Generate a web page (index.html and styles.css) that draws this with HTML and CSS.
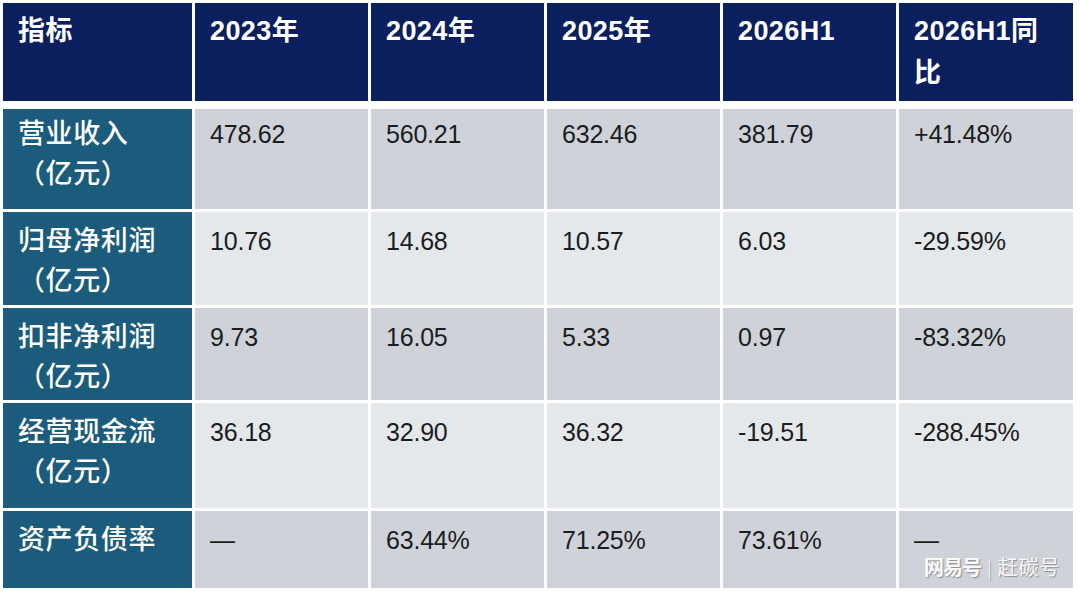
FILE: index.html
```html
<!DOCTYPE html>
<html lang="zh-CN">
<head>
<meta charset="utf-8">
<title>财务指标</title>
<link rel="stylesheet" href="styles.css">
</head>
<body>
<div class="page">
  <div class="table">
    <div class="row head">
      <div class="cell">指标</div>
      <div class="cell">2023年</div>
      <div class="cell">2024年</div>
      <div class="cell">2025年</div>
      <div class="cell">2026H1</div>
      <div class="cell">2026H1同比</div>
    </div>
    <div class="row r1 grey">
      <div class="cell label">营业收入<br>（亿元）</div>
      <div class="cell">478.62</div>
      <div class="cell">560.21</div>
      <div class="cell">632.46</div>
      <div class="cell">381.79</div>
      <div class="cell">+41.48%</div>
    </div>
    <div class="row r2 light">
      <div class="cell label">归母净利润<br>（亿元）</div>
      <div class="cell">10.76</div>
      <div class="cell">14.68</div>
      <div class="cell">10.57</div>
      <div class="cell">6.03</div>
      <div class="cell">-29.59%</div>
    </div>
    <div class="row r3 grey">
      <div class="cell label">扣非净利润<br>（亿元）</div>
      <div class="cell">9.73</div>
      <div class="cell">16.05</div>
      <div class="cell">5.33</div>
      <div class="cell">0.97</div>
      <div class="cell">-83.32%</div>
    </div>
    <div class="row r4 light">
      <div class="cell label">经营现金流<br>（亿元）</div>
      <div class="cell">36.18</div>
      <div class="cell">32.90</div>
      <div class="cell">36.32</div>
      <div class="cell">-19.51</div>
      <div class="cell">-288.45%</div>
    </div>
    <div class="row r5 grey">
      <div class="cell label">资产负债率</div>
      <div class="cell">—</div>
      <div class="cell">63.44%</div>
      <div class="cell">71.25%</div>
      <div class="cell">73.61%</div>
      <div class="cell">—</div>
    </div>
  </div>
  <div class="watermark"><span class="wm-logo">网易号</span><span class="wm-sep">|</span><span class="wm-name">赶碳号</span></div>
</div>
</body>
</html>
```

FILE: styles.css
```css
html, body {
  margin: 0;
  padding: 0;
  background: #ffffff;
}

.page {
  position: relative;
  width: 1080px;
  height: 593px;
  padding: 3px 0 0 3px;
  box-sizing: border-box;
  font-family: "Liberation Sans", "Noto Sans CJK SC", sans-serif;
}

.table {
  display: flex;
  flex-direction: column;
  gap: 3px;
  width: 1070px;
}

.row {
  display: grid;
  grid-template-columns: 189px 173px 173px 173px 173px 174px;
  column-gap: 3px;
}

.cell {
  box-sizing: border-box;
  padding: 9px 10px 0 15px;
  font-size: 25px;
  line-height: 40px;
  color: #1c1c1e;
  letter-spacing: -0.2px;
}

.head {
  height: 98px;
  margin-bottom: 5px;
}

.head .cell {
  background: #0b1f5e;
  color: #ffffff;
  font-weight: bold;
  font-size: 27px;
  line-height: 42px;
  padding-top: 7px;
  padding-right: 12px;
  letter-spacing: 0.4px;
}

.label {
  background: #1b5b7c;
  color: #ffffff;
  font-family: "Noto Sans CJK SC", sans-serif;
  font-weight: 500;
  font-size: 27px;
  letter-spacing: 0.6px;
  padding-top: 7px;
}

.grey .cell:not(.label) {
  background: #cfd3d9;
}

.light .cell:not(.label) {
  background: #e5e8eb;
}

.r1 { height: 100px; }
.r2 { height: 93px; }
.r3 { height: 92px; }
.r4 { height: 105px; }
.r5 { height: 77px; }

.r1 .cell { padding-top: 5px; }
.r1 .label { padding-top: 3px; }

.watermark {
  position: absolute;
  left: 924px;
  top: 553px;
  display: flex;
  align-items: center;
  gap: 6px;
  font-family: "Noto Sans CJK SC", sans-serif;
  color: rgba(255, 255, 255, 0.95);
  text-shadow: 1px 1px 1px rgba(90, 90, 90, 0.55);
  font-size: 20px;
  line-height: 28px;
}

.wm-logo {
  font-weight: bold;
  letter-spacing: -1px;
}

.wm-sep {
  font-size: 18px;
  font-weight: 300;
}

.wm-name {
  letter-spacing: 1px;
}
```
